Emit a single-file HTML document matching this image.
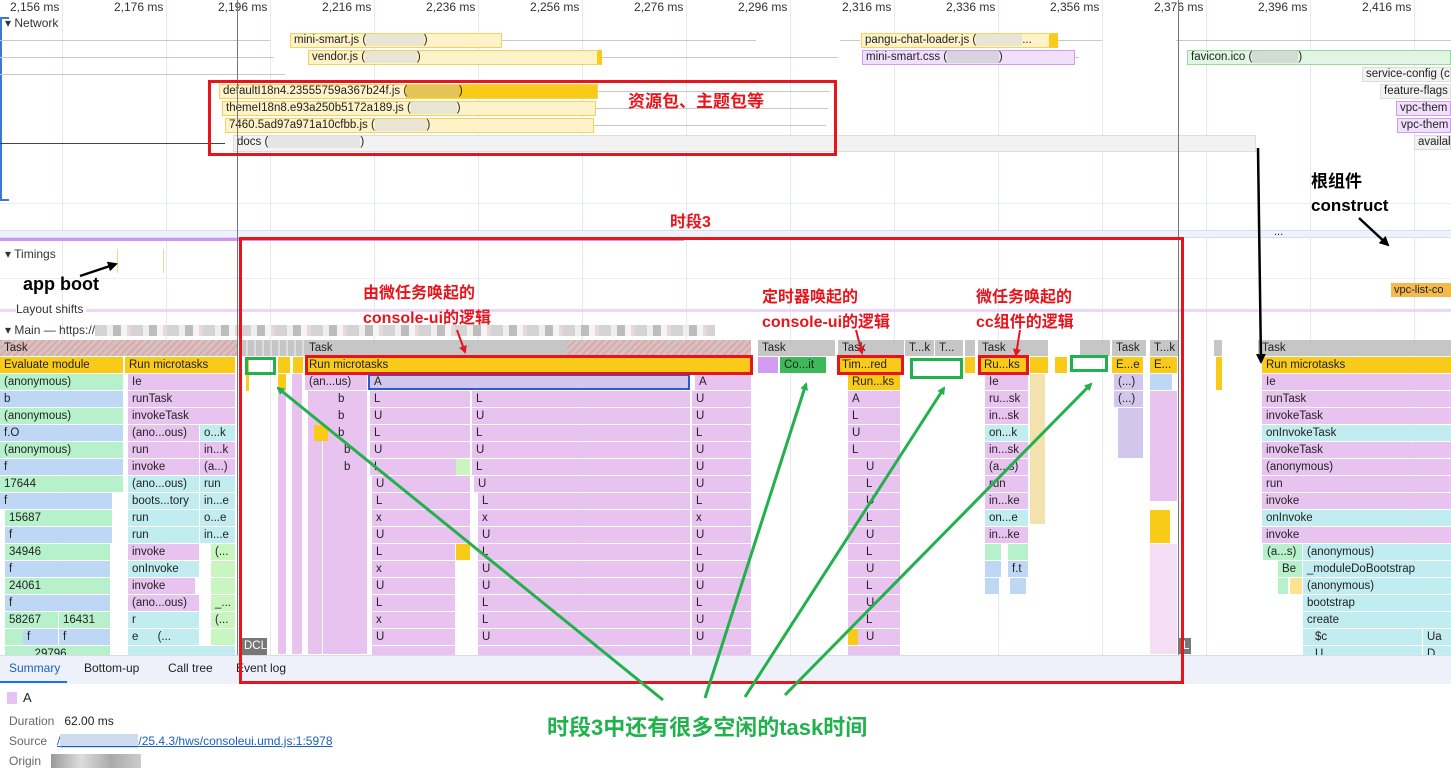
<!DOCTYPE html>
<html><head><meta charset="utf-8">
<style>
*{margin:0;padding:0;box-sizing:border-box}
body{width:1451px;height:779px;position:relative;overflow:hidden;background:#fff;font-family:"Liberation Sans","Noto Sans CJK SC",sans-serif;font-size:12px;color:#222}
.a{position:absolute}
.gl{position:absolute;top:0;width:1px;height:655px;background:#e3e9f3}
.rl{position:absolute;top:0;font-size:12px;color:#333}
.nb{position:absolute;height:15px;font-size:11.5px;line-height:13px;padding-left:3px;white-space:nowrap;overflow:hidden;border:1px solid #f3d25e;background:#fdf2c8}
.nb span{opacity:.6}
.wh{position:absolute;height:1px;background:#c8c8c8}
#fl{position:absolute;left:0;top:340px;width:1451px;height:315px;overflow:hidden}
#fl div{position:absolute;height:16px;line-height:16px;font-size:11.5px;padding-left:4px;white-space:nowrap;overflow:hidden;color:#222}
.t{background:#c6c6c6}.y{background:#f9ca17}.p{background:#e9c3ef}.g{background:#b7f1cc}.b{background:#bdd7f4}.c{background:#c1ecf0}.l{background:#d3c6ec}.w{background:#fff}.gr{background:#c9f5c0}
.s{width:3px;padding:0!important}
.rt{position:absolute;color:#e8141c;font-weight:bold;font-size:16px;line-height:25px;white-space:nowrap}
.box{position:absolute;border:3px solid #e8141c}
.gbox{position:absolute;border:3px solid #22b14c}
</style></head><body>

<div class="gl" style="left:62px"></div><div class="gl" style="left:166px"></div><div class="gl" style="left:270px"></div><div class="gl" style="left:374px"></div><div class="gl" style="left:478px"></div><div class="gl" style="left:582px"></div><div class="gl" style="left:686px"></div><div class="gl" style="left:790px"></div><div class="gl" style="left:894px"></div><div class="gl" style="left:998px"></div><div class="gl" style="left:1102px"></div><div class="gl" style="left:1206px"></div><div class="gl" style="left:1310px"></div><div class="gl" style="left:1414px"></div>

<div class="rl" style="left:10px">2,156 ms</div><div class="rl" style="left:114px">2,176 ms</div><div class="rl" style="left:218px">2,196 ms</div><div class="rl" style="left:322px">2,216 ms</div><div class="rl" style="left:426px">2,236 ms</div><div class="rl" style="left:530px">2,256 ms</div><div class="rl" style="left:634px">2,276 ms</div><div class="rl" style="left:738px">2,296 ms</div><div class="rl" style="left:842px">2,316 ms</div><div class="rl" style="left:946px">2,336 ms</div><div class="rl" style="left:1050px">2,356 ms</div><div class="rl" style="left:1154px">2,376 ms</div><div class="rl" style="left:1258px">2,396 ms</div><div class="rl" style="left:1362px">2,416 ms</div>

<div class="a" style="left:0;top:17px;height:184px;border-left:2px solid #3b78d8;border-top:2px solid #3b78d8;border-bottom:2px solid #3b78d8;width:9px"></div>
<div class="a" style="left:5px;top:16px;font-size:12px;color:#333">▾ Network</div>

<div class="wh" style="left:0;top:40px;width:270px"></div><div class="wh" style="left:502px;top:40px;width:254px"></div>
<div class="wh" style="left:0;top:57px;width:274px"></div><div class="wh" style="left:602px;top:57px;width:236px"></div>
<div class="wh" style="left:0;top:74px;width:285px"></div>
<div class="wh" style="left:598px;top:91px;width:232px"></div><div class="wh" style="left:596px;top:108px;width:232px"></div><div class="wh" style="left:594px;top:125px;width:232px"></div>
<div class="wh" style="left:840px;top:40px;width:20px"></div><div class="wh" style="left:1058px;top:40px;width:44px"></div><div class="wh" style="left:1176px;top:40px;width:275px"></div>
<div class="wh" style="left:1075px;top:57px;width:4px"></div>
<div class="a" style="left:0;top:143px;width:225px;height:1px;background:#444"></div>

<div class="nb" style="left:290px;top:33px;width:212px">mini-smart.js (<span style="background:#ddd;color:#ddd">xxxxxxxxxx</span>)</div>
<div class="nb" style="left:308px;top:50px;width:294px;border-right:5px solid #f9ca17">vendor.js (<span style="background:#ddd;color:#ddd">xxxxxxxxx</span>)</div>
<div class="nb" style="left:219px;top:84px;width:379px;background:linear-gradient(90deg,#fdf2c8 186px,#f9ca17 186px)">defaultI18n4.23555759a367b24f.js (<span style="background:#d9c089;color:#d9c089">xxxxxxxxx</span>)</div>
<div class="nb" style="left:222px;top:101px;width:374px">themeI18n8.e93a250b5172a189.js (<span style="background:#ddd;color:#ddd">xxxxxxxx</span>)</div>
<div class="nb" style="left:225px;top:118px;width:369px">7460.5ad97a971a10cfbb.js (<span style="background:#ddd;color:#ddd">xxxxxxxxx</span>)</div>
<div class="nb" style="left:233px;top:135px;width:1023px;height:17px;background:#f2f2f2;border-color:#ddd">docs (<span style="background:#ddd;color:#ddd">xxxxxxxxxxxxxxxx</span>)</div>
<div class="nb" style="left:861px;top:33px;width:197px;border-right:9px solid #f9ca17">pangu-chat-loader.js (<span style="background:#ddd;color:#ddd">xxxxxxxx</span>...</div>
<div class="nb" style="left:862px;top:50px;width:213px;background:#f0e0fb;border-color:#d39cf4">mini-smart.css (<span style="background:#ccc;color:#ccc">xxxxxxxxx</span>)</div>
<div class="nb" style="left:1187px;top:50px;width:264px;background:#e0f6e2;border-color:#9ad8a3">favicon.ico (<span style="background:#ccc;color:#ccc">xxxxxxxx</span>)</div>
<div class="nb" style="left:1362px;top:67px;width:89px;background:#f2f2f2;border-color:#ddd">service-config (c</div>
<div class="nb" style="left:1380px;top:84px;width:71px;background:#f2f2f2;border-color:#ddd">feature-flags</div>
<div class="nb" style="left:1396px;top:101px;width:55px;background:#f0e0fb;border-color:#d39cf4">vpc-them</div>
<div class="nb" style="left:1397px;top:118px;width:54px;background:#f0e0fb;border-color:#d39cf4">vpc-them</div>
<div class="nb" style="left:1414px;top:135px;width:37px;background:#f2f2f2;border-color:#ddd">availab</div>

<div class="a" style="left:0;top:203px;width:1451px;height:1px;background:#e8ecf4"></div>
<div class="a" style="left:0;top:230px;width:1451px;height:8px;background:#eef2fa;border-top:1px solid #d6def0;border-bottom:1px solid #d6def0"></div>
<div class="a" style="left:0;top:238px;width:684px;height:3px;background:#cf95f5"></div>
<div class="a" style="left:1274px;top:226px;font-size:11px">...</div>
<div class="a" style="left:5px;top:247px;font-size:12px;color:#333">▾ Timings</div>
<div class="a" style="left:117px;top:249px;width:1px;height:24px;background:#f3d78a"></div>
<div class="a" style="left:163px;top:249px;width:1px;height:24px;background:#f3d78a"></div>
<div class="a" style="left:1391px;top:283px;width:60px;height:14px;background:#f4b94c;font-size:11px;line-height:14px;padding-left:3px;overflow:hidden;white-space:nowrap">vpc-list-co</div>
<div class="a" style="left:0;top:278px;width:1451px;height:1px;background:#eee"></div>
<div class="a" style="left:16px;top:302px;font-size:12px;color:#333;background:#fff;padding-right:3px;z-index:2">Layout shifts</div>
<div class="a" style="left:0;top:309px;width:1451px;height:3px;background:#ecd6fb"></div>
<div class="a" style="left:5px;top:323px;font-size:12px;color:#333;white-space:nowrap">▾ Main — https://<span style="display:inline-block;width:620px;height:11px;vertical-align:middle;background:repeating-linear-gradient(90deg,#d4d4d4 0 12px,#eee 12px 18px,#bdbdbd 18px 26px,#f4f4f4 26px 32px,#e8d8d8 32px 36px)"></span></div>

<div id="fl">
<div class="t" style="left:0;top:0;width:237px;background:repeating-linear-gradient(135deg,#f0a0a0 0 2px,#c8c8c8 2px 5px)">Task</div>
<div class="t" style="left:240px;top:0;width:511px;background:repeating-linear-gradient(90deg,#c6c6c6 0 6px,#ddd 6px 8px)"></div>
<div class="t" style="left:305px;top:0;width:262px">Task</div>
<div class="t" style="left:567px;top:0;width:184px;background:repeating-linear-gradient(135deg,#f0a0a0 0 2px,#c8c8c8 2px 5px)"></div>
<div class="t" style="left:758px;top:0;width:77px">Task</div>
<div class="t" style="left:838px;top:0;width:66px">Task</div>
<div class="t" style="left:905px;top:0;width:29px">T...k</div>
<div class="t" style="left:935px;top:0;width:28px">T...</div>
<div class="t" style="left:965px;top:0;width:10px"></div>
<div class="t" style="left:978px;top:0;width:70px">Task</div>
<div class="t" style="left:1080px;top:0;width:30px"></div>
<div class="t" style="left:1112px;top:0;width:34px">Task</div>
<div class="t" style="left:1150px;top:0;width:28px">T...k</div>
<div class="t" style="left:1214px;top:0;width:8px"></div>
<div class="t" style="left:1258px;top:0;width:193px">Task</div>

<div class="y" style="left:0;top:17px;width:123px">Evaluate module</div><div class="y" style="left:125px;top:17px;width:110px">Run microtasks</div>
<div class="g" style="left:0;top:34px;width:123px">(anonymous)</div><div class="p" style="left:128px;top:34px;width:107px">Ie</div>
<div class="b" style="left:0;top:51px;width:123px">b</div><div class="p" style="left:128px;top:51px;width:107px">runTask</div>
<div class="g" style="left:0;top:68px;width:123px">(anonymous)</div><div class="p" style="left:128px;top:68px;width:107px">invokeTask</div>
<div class="b" style="left:0;top:85px;width:123px">f.O</div><div class="p" style="left:128px;top:85px;width:71px">(ano...ous)</div><div class="c" style="left:200px;top:85px;width:35px">o...k</div>
<div class="g" style="left:0;top:102px;width:123px">(anonymous)</div><div class="p" style="left:128px;top:102px;width:71px">run</div><div class="p" style="left:200px;top:102px;width:35px">in...k</div>
<div class="b" style="left:0;top:119px;width:123px">f</div><div class="p" style="left:128px;top:119px;width:71px">invoke</div><div class="p" style="left:200px;top:119px;width:35px">(a...)</div>
<div class="g" style="left:0;top:136px;width:123px">17644</div><div class="c" style="left:128px;top:136px;width:71px">(ano...ous)</div><div class="c" style="left:200px;top:136px;width:35px">run</div>
<div class="b" style="left:0;top:153px;width:112px">f</div><div class="c" style="left:128px;top:153px;width:71px">boots...tory</div><div class="c" style="left:200px;top:153px;width:35px">in...e</div>
<div class="g" style="left:5px;top:170px;width:107px">15687</div><div class="c" style="left:128px;top:170px;width:71px">run</div><div class="c" style="left:200px;top:170px;width:35px">o...e</div>
<div class="b" style="left:5px;top:187px;width:107px">f</div><div class="c" style="left:128px;top:187px;width:71px">run</div><div class="c" style="left:200px;top:187px;width:35px">in...e</div>
<div class="g" style="left:5px;top:204px;width:105px">34946</div><div class="p" style="left:128px;top:204px;width:71px">invoke</div><div class="gr" style="left:211px;top:204px;width:24px">(...</div>
<div class="b" style="left:5px;top:221px;width:105px">f</div><div class="c" style="left:128px;top:221px;width:71px">onInvoke</div><div class="gr" style="left:211px;top:221px;width:24px"></div>
<div class="g" style="left:5px;top:238px;width:105px">24061</div><div class="p" style="left:128px;top:238px;width:67px">invoke</div><div class="gr" style="left:211px;top:238px;width:24px"></div>
<div class="b" style="left:5px;top:255px;width:105px">f</div><div class="p" style="left:128px;top:255px;width:71px">(ano...ous)</div><div class="gr" style="left:211px;top:255px;width:24px">_...</div>
<div class="g" style="left:5px;top:272px;width:53px">58267</div><div class="g" style="left:59px;top:272px;width:51px">16431</div><div class="c" style="left:128px;top:272px;width:71px">r</div><div class="gr" style="left:211px;top:272px;width:24px">(...</div>
<div class="g" style="left:5px;top:289px;width:18px"></div><div class="b" style="left:23px;top:289px;width:35px">f</div><div class="b" style="left:59px;top:289px;width:51px">f</div><div class="c" style="left:128px;top:289px;width:71px">e&nbsp;&nbsp;&nbsp;&nbsp;&nbsp;&nbsp;(...</div><div class="gr" style="left:211px;top:289px;width:24px"></div>
<div class="g" style="left:5px;top:306px;width:105px">&nbsp;&nbsp;&nbsp;&nbsp;&nbsp;&nbsp;&nbsp;&nbsp;29796</div><div class="c" style="left:128px;top:306px;width:107px"></div>

<div class="y s" style="left:246px;top:17px;height:34px!important"></div>
<div class="y" style="left:278px;top:17px;width:12px;padding:0"></div>
<div class="y" style="left:293px;top:17px;width:10px;padding:0"></div>
<div class="p" style="left:278px;top:34px;width:8px;height:280px!important;padding:0"></div>
<div class="p" style="left:292px;top:34px;width:10px;height:280px!important;padding:0"></div>
<div class="y" style="left:278px;top:34px;width:8px;padding:0"></div>

<div class="y" style="left:305px;top:17px;width:446px">Run microtasks</div>
<div class="p" style="left:305px;top:34px;width:62px">(an...us)</div>
<div class="p" style="left:308px;top:51px;width:59px;height:263px!important"></div>
<div class="w" style="left:322px;top:85px;width:1px;height:230px!important;padding:0"></div>
<div class="p" style="left:334px;top:51px;width:29px">b</div><div class="p" style="left:334px;top:68px;width:29px">b</div><div class="p" style="left:334px;top:85px;width:29px">b</div><div class="p" style="left:340px;top:102px;width:23px">b</div><div class="p" style="left:340px;top:119px;width:23px">b</div>
<div class="y" style="left:314px;top:85px;width:14px;padding:0"></div>
<div class="l" style="left:368px;top:34px;width:322px;border:2px solid #2a5bd7;line-height:12px">A</div>
<div class="p" style="left:695px;top:34px;width:56px">A</div>
<div class="p" style="left:370px;top:51px;width:100px">L</div><div class="p" style="left:472px;top:51px;width:218px">L</div><div class="p" style="left:692px;top:51px;width:59px">U</div>
<div class="p" style="left:370px;top:68px;width:100px">U</div><div class="p" style="left:472px;top:68px;width:218px">U</div><div class="p" style="left:692px;top:68px;width:59px">U</div>
<div class="p" style="left:370px;top:85px;width:100px">L</div><div class="p" style="left:472px;top:85px;width:218px">L</div><div class="p" style="left:692px;top:85px;width:59px">L</div>
<div class="p" style="left:370px;top:102px;width:100px">U</div><div class="p" style="left:472px;top:102px;width:218px">U</div><div class="p" style="left:692px;top:102px;width:59px">U</div>
<div class="p" style="left:370px;top:119px;width:86px">L</div><div class="gr" style="left:456px;top:119px;width:14px"></div><div class="p" style="left:472px;top:119px;width:218px">L</div><div class="p" style="left:692px;top:119px;width:59px">U</div>
<div class="p" style="left:372px;top:136px;width:98px">U</div><div class="p" style="left:474px;top:136px;width:216px">U</div><div class="p" style="left:692px;top:136px;width:59px">U</div>
<div class="p" style="left:372px;top:153px;width:98px">L</div><div class="p" style="left:478px;top:153px;width:212px">L</div><div class="p" style="left:692px;top:153px;width:59px">L</div>
<div class="p" style="left:372px;top:170px;width:98px">x</div><div class="p" style="left:478px;top:170px;width:212px">x</div><div class="p" style="left:692px;top:170px;width:59px">x</div>
<div class="p" style="left:372px;top:187px;width:98px">U</div><div class="p" style="left:478px;top:187px;width:212px">U</div><div class="p" style="left:692px;top:187px;width:59px">U</div>
<div class="p" style="left:372px;top:204px;width:83px">L</div><div class="y" style="left:456px;top:204px;width:14px;padding:0"></div><div class="p" style="left:478px;top:204px;width:212px">L</div><div class="p" style="left:692px;top:204px;width:59px">L</div>
<div class="p" style="left:372px;top:221px;width:83px">x</div><div class="p" style="left:478px;top:221px;width:212px">U</div><div class="p" style="left:692px;top:221px;width:59px">U</div>
<div class="p" style="left:372px;top:238px;width:83px">U</div><div class="p" style="left:478px;top:238px;width:212px">U</div><div class="p" style="left:692px;top:238px;width:59px">U</div>
<div class="p" style="left:372px;top:255px;width:83px">L</div><div class="p" style="left:478px;top:255px;width:212px">L</div><div class="p" style="left:692px;top:255px;width:59px">L</div>
<div class="p" style="left:372px;top:272px;width:83px">x</div><div class="p" style="left:478px;top:272px;width:212px">L</div><div class="p" style="left:692px;top:272px;width:59px">U</div>
<div class="p" style="left:372px;top:289px;width:83px">U</div><div class="p" style="left:478px;top:289px;width:212px">U</div><div class="p" style="left:692px;top:289px;width:59px">U</div>
<div class="p" style="left:372px;top:306px;width:83px"></div><div class="p" style="left:478px;top:306px;width:212px"></div><div class="p" style="left:692px;top:306px;width:59px"></div>

<div class="l" style="left:758px;top:17px;width:20px;background:#d29cf3;padding:0"></div>
<div style="left:780px;top:17px;width:46px;background:#3cba5a">Co...it</div>
<div class="y" style="left:838px;top:17px;width:65px">Tim...red</div>
<div class="y" style="left:848px;top:34px;width:52px">Run...ks</div>
<div class="p" style="left:848px;top:51px;width:52px">A</div><div class="p" style="left:848px;top:68px;width:52px">L</div><div class="p" style="left:848px;top:85px;width:52px">U</div><div class="p" style="left:848px;top:102px;width:52px">L</div>
<div class="p" style="left:848px;top:119px;width:52px;padding-left:18px">U</div><div class="p" style="left:848px;top:136px;width:52px;padding-left:18px">L</div><div class="p" style="left:848px;top:153px;width:52px;padding-left:18px">U</div><div class="p" style="left:848px;top:170px;width:52px;padding-left:18px">L</div><div class="p" style="left:848px;top:187px;width:52px;padding-left:18px">U</div><div class="p" style="left:848px;top:204px;width:52px;padding-left:18px">L</div><div class="p" style="left:848px;top:221px;width:52px;padding-left:18px">U</div><div class="p" style="left:848px;top:238px;width:52px;padding-left:18px">L</div><div class="p" style="left:848px;top:255px;width:52px;padding-left:18px">U</div><div class="p" style="left:848px;top:272px;width:52px;padding-left:18px">L</div><div class="p" style="left:848px;top:289px;width:52px;padding-left:18px">U</div><div class="p" style="left:848px;top:306px;width:52px"></div>
<div class="y" style="left:848px;top:289px;width:10px;padding:0"></div>
<div class="y" style="left:965px;top:17px;width:10px;padding:0"></div>
<div class="y" style="left:980px;top:17px;width:48px">Ru...ks</div><div class="y" style="left:1030px;top:17px;width:18px;padding:0"></div><div class="y" style="left:1055px;top:17px;width:12px;padding:0"></div>
<div class="p" style="left:985px;top:34px;width:43px">Ie</div><div class="p" style="left:985px;top:51px;width:43px">ru...sk</div><div class="p" style="left:985px;top:68px;width:43px">in...sk</div><div class="c" style="left:985px;top:85px;width:43px">on...k</div><div class="p" style="left:985px;top:102px;width:43px">in...sk</div><div class="p" style="left:985px;top:119px;width:43px">(a...s)</div><div class="p" style="left:985px;top:136px;width:43px">run</div><div class="p" style="left:985px;top:153px;width:43px">in...ke</div><div class="c" style="left:985px;top:170px;width:43px">on...e</div><div class="p" style="left:985px;top:187px;width:43px">in...ke</div>
<div class="g" style="left:985px;top:204px;width:16px;padding:0"></div><div class="g" style="left:1008px;top:204px;width:20px;padding:0"></div>
<div class="b" style="left:985px;top:221px;width:16px;padding:0"></div><div class="b" style="left:1008px;top:221px;width:20px">f.t</div>
<div class="b" style="left:985px;top:238px;width:14px;padding:0"></div><div class="b" style="left:1010px;top:238px;width:16px;padding:0"></div>
<div class="p" style="left:1030px;top:34px;width:15px;height:150px!important;padding:0;background:#f3e2ae"></div>
<div class="y" style="left:1112px;top:17px;width:31px">E...e</div><div class="y" style="left:1150px;top:17px;width:27px">E...</div>
<div class="l" style="left:1114px;top:34px;width:29px">(...)</div><div class="l" style="left:1114px;top:51px;width:29px">(...)</div>
<div class="l" style="left:1118px;top:68px;width:25px;height:50px!important;padding:0"></div>
<div class="b" style="left:1150px;top:34px;width:22px;padding:0"></div>
<div class="p" style="left:1150px;top:51px;width:27px;height:110px!important;padding:0"></div>
<div class="y" style="left:1150px;top:170px;width:20px;height:33px!important;padding:0"></div>
<div class="p" style="left:1150px;top:204px;width:27px;height:110px!important;padding:0;background:#f3def5"></div>
<div class="y" style="left:1216px;top:17px;width:6px;height:33px!important;padding:0"></div>

<div class="y" style="left:1262px;top:17px;width:189px">Run microtasks</div>
<div class="p" style="left:1262px;top:34px;width:189px">Ie</div>
<div class="p" style="left:1262px;top:51px;width:189px">runTask</div>
<div class="p" style="left:1262px;top:68px;width:189px">invokeTask</div>
<div class="c" style="left:1262px;top:85px;width:189px">onInvokeTask</div>
<div class="p" style="left:1262px;top:102px;width:189px">invokeTask</div>
<div class="p" style="left:1262px;top:119px;width:189px">(anonymous)</div>
<div class="p" style="left:1262px;top:136px;width:189px">run</div>
<div class="p" style="left:1262px;top:153px;width:189px">invoke</div>
<div class="c" style="left:1262px;top:170px;width:189px">onInvoke</div>
<div class="p" style="left:1262px;top:187px;width:189px">invoke</div>
<div class="g" style="left:1263px;top:204px;width:39px">(a...s)</div><div class="c" style="left:1303px;top:204px;width:148px">(anonymous)</div>
<div class="g" style="left:1278px;top:221px;width:24px">Be</div><div class="c" style="left:1303px;top:221px;width:148px">_moduleDoBootstrap</div>
<div class="g" style="left:1278px;top:238px;width:10px;padding:0"></div><div class="y" style="left:1290px;top:238px;width:12px;padding:0;background:#fde28f"></div><div class="c" style="left:1303px;top:238px;width:148px">(anonymous)</div>
<div class="c" style="left:1303px;top:255px;width:148px">bootstrap</div>
<div class="c" style="left:1303px;top:272px;width:148px">create</div>
<div class="c" style="left:1303px;top:289px;width:119px;padding-left:12px">$c</div><div class="c" style="left:1423px;top:289px;width:28px">Ua</div>
<div class="c" style="left:1303px;top:306px;width:119px;padding-left:12px">U</div><div class="c" style="left:1423px;top:306px;width:28px">D</div>
<div style="left:240px;top:298px;width:27px;background:#777;color:#fff;height:17px!important">DCL</div>
<div style="left:1179px;top:298px;width:12px;background:#777;color:#fff">L</div>
</div>

<div class="a" style="left:237px;top:0;width:1px;height:655px;background:#777"></div>
<div class="a" style="left:1178px;top:0;width:1px;height:655px;background:#777"></div>

<div class="a" style="left:0;top:655px;width:1451px;height:29px;background:#eef1f9;border-top:1px solid #d6dcea"></div>
<div class="a" style="left:9px;top:661px;font-size:12px;color:#1a5fc4">Summary</div>
<div class="a" style="left:0;top:681px;width:67px;height:2px;background:#1a73e8"></div>
<div class="a" style="left:84px;top:661px;font-size:12px">Bottom-up</div>
<div class="a" style="left:168px;top:661px;font-size:12px">Call tree</div>
<div class="a" style="left:236px;top:661px;font-size:12px">Event log</div>
<div class="a" style="left:7px;top:692px;width:10px;height:12px;background:#e4c3f0"></div>
<div class="a" style="left:23px;top:690px;font-size:13px">A</div>
<div class="a" style="left:9px;top:714px;font-size:12px;color:#666">Duration&nbsp;&nbsp;&nbsp;<span style="color:#222">62.00 ms</span></div>
<div class="a" style="left:9px;top:734px;font-size:12px;color:#666">Source&nbsp;&nbsp;&nbsp;<span style="color:#1a5fc4;text-decoration:underline">/<span style="background:#cfdcf0;color:transparent">xxxxxxxxxxxxx</span>/25.4.3/hws/consoleui.umd.js:1:5978</span></div>
<div class="a" style="left:9px;top:754px;font-size:12px;color:#666">Origin&nbsp;&nbsp;&nbsp;<span style="background:linear-gradient(90deg,#999,#ddd,#aaa,#ccc);color:transparent">xxxxxxxxxxxxxxx</span></div>

<div class="box" style="left:208px;top:80px;width:629px;height:76px"></div>
<div class="rt" style="left:628px;top:89px;font-size:17px">资源包、主题包等</div>
<div class="rt" style="left:670px;top:210px">时段3</div>
<div class="box" style="left:239px;top:237px;width:945px;height:447px"></div>
<div class="rt" style="left:363px;top:281px">由微任务唤起的<br>console-ui的逻辑</div>
<div class="rt" style="left:762px;top:285px">定时器唤起的<br>console-ui的逻辑</div>
<div class="rt" style="left:976px;top:285px">微任务唤起的<br>cc组件的逻辑</div>
<div class="a" style="left:23px;top:274px;font-weight:bold;font-size:18px;color:#000">app boot</div>
<div class="a" style="left:1311px;top:170px;font-weight:bold;font-size:17px;line-height:24px;color:#000">根组件<br>construct</div>
<div class="a" style="left:547px;top:710px;font-weight:bold;font-size:22px;color:#22b14c;white-space:nowrap">时段3中还有很多空闲的task时间</div>

<div class="box" style="left:305px;top:355px;width:448px;height:20px"></div>
<div class="box" style="left:837px;top:355px;width:67px;height:20px"></div>
<div class="box" style="left:978px;top:355px;width:51px;height:20px"></div>
<div class="gbox" style="left:245px;top:357px;width:31px;height:18px"></div>
<div class="gbox" style="left:910px;top:358px;width:53px;height:21px"></div>
<div class="gbox" style="left:1070px;top:355px;width:38px;height:17px"></div>

<svg class="a" style="left:0;top:0" width="1451" height="779">
<defs>
<marker id="ag" markerWidth="8" markerHeight="8" refX="6" refY="4" orient="auto" markerUnits="userSpaceOnUse"><path d="M0,0 L8,4 L0,8 z" fill="#22b14c"/></marker>
<marker id="ar" markerWidth="8" markerHeight="8" refX="6" refY="4" orient="auto" markerUnits="userSpaceOnUse"><path d="M0,0 L8,4 L0,8 z" fill="#e8141c"/></marker>
<marker id="ak" markerWidth="10" markerHeight="10" refX="8" refY="5" orient="auto" markerUnits="userSpaceOnUse"><path d="M0,0 L10,5 L0,10 z" fill="#000"/></marker>
</defs>
<g stroke="#22b14c" stroke-width="3" fill="none" marker-end="url(#ag)">
<line x1="663" y1="700" x2="278" y2="388"/>
<line x1="705" y1="698" x2="806" y2="384"/>
<line x1="745" y1="697" x2="944" y2="388"/>
<line x1="785" y1="695" x2="1091" y2="384"/>
</g>
<g stroke="#e8141c" stroke-width="2" fill="none" marker-end="url(#ar)">
<line x1="457" y1="330" x2="465" y2="352"/>
<line x1="856" y1="330" x2="862" y2="353"/>
<line x1="1020" y1="330" x2="1016" y2="355"/>
</g>
<g stroke="#000" stroke-width="2.5" fill="none" marker-end="url(#ak)">
<line x1="80" y1="276" x2="116" y2="264"/>
<line x1="1359" y1="218" x2="1388" y2="245"/>
<line x1="1258" y1="148" x2="1261" y2="362"/>
</g>
</svg>
</body></html>
